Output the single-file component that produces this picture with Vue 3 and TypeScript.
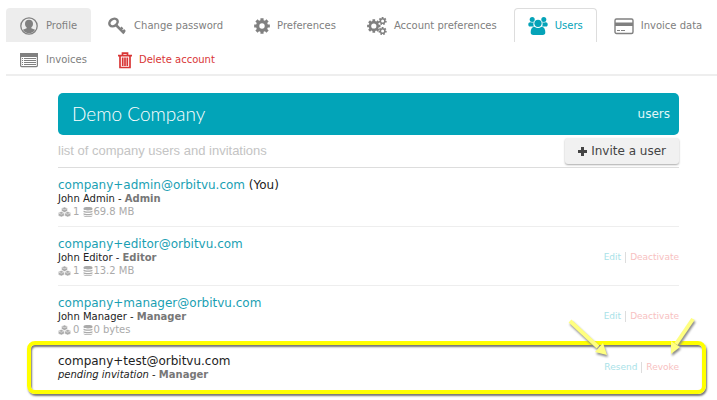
<script setup lang="ts">
interface Tab {
  id: string
  label: string
  state?: 'hover' | 'active' | 'danger'
}

interface Member {
  email: string
  name: string
  role: string
  you?: boolean
  pending?: boolean
  items?: number
  storage?: string
  actions: string[]
}

const tabs: Tab[] = [
  { id: 'profile', label: 'Profile', state: 'hover' },
  { id: 'key', label: 'Change password' },
  { id: 'gear', label: 'Preferences' },
  { id: 'gears', label: 'Account preferences' },
  { id: 'users', label: 'Users', state: 'active' },
  { id: 'card', label: 'Invoice data' },
  { id: 'list', label: 'Invoices' },
  { id: 'trash', label: 'Delete account', state: 'danger' },
]

const members: Member[] = [
  { email: 'company+admin@orbitvu.com', name: 'John Admin', role: 'Admin', you: true, items: 1, storage: '69.8 MB', actions: [] },
  { email: 'company+editor@orbitvu.com', name: 'John Editor', role: 'Editor', items: 1, storage: '13.2 MB', actions: ['Edit', 'Deactivate'] },
  { email: 'company+manager@orbitvu.com', name: 'John Manager', role: 'Manager', items: 0, storage: '0 bytes', actions: ['Edit', 'Deactivate'] },
  { email: 'company+test@orbitvu.com', name: 'pending invitation', role: 'Manager', pending: true, actions: ['Resend', 'Revoke'] },
]

// Outline of a cog with square teeth around a centre point.
function cog(cx: number, cy: number, outer: number, inner: number, teeth: number): string {
  const points: string[] = []
  const step = (Math.PI * 2) / teeth
  for (let i = 0; i < teeth; i++) {
    const a = i * step - Math.PI / 2
    const corners: [number, number][] = [[-0.34, inner], [-0.25, outer], [0.25, outer], [0.34, inner]]
    for (const [offset, r] of corners) {
      const angle = a + offset * step
      points.push(`${(cx + Math.cos(angle) * r).toFixed(2)} ${(cy + Math.sin(angle) * r).toFixed(2)}`)
    }
  }
  return `M${points.join('L')}Z`
}
</script>

<template>
  <div class="page">
    <nav class="tabs" aria-label="Account">
      <a v-for="tab in tabs" :key="tab.id" href="#" class="tab" :class="tab.state">
        <svg v-if="tab.id === 'profile'" class="icon" width="19" height="18" viewBox="0 0 19 18" aria-hidden="true">
          <circle cx="9" cy="9" r="8.200" fill="none" stroke="currentColor" stroke-width="1.300" />
          <path fill="currentColor" d="M9 2.800c2.500 0 4 1.600 4 3.900 0 1.600-.7 3-1.700 3.800v.8l3.800 1.500c-1.200 2.200-3.400 3.500-6.100 3.500s-4.900-1.300-6.100-3.500l3.800-1.500v-.8C5.700 9.700 5 8.300 5 6.700c0-2.300 1.500-3.900 4-3.900z" />
        </svg>
        <svg v-else-if="tab.id === 'key'" class="icon" width="19" height="18" viewBox="0 0 19 18" aria-hidden="true">
          <ellipse cx="5.500" cy="5.500" rx="4.500" ry="3.400" transform="rotate(-38 5.500 5.500)" fill="none" stroke="currentColor" stroke-width="2.500" />
          <path fill="none" stroke="currentColor" stroke-width="2.500" d="M8 8l8.200 8.300M14.500 10.500l-2.500 2.500M17 13l-2.500 2.500" />
        </svg>
        <svg v-else-if="tab.id === 'gear'" class="icon" width="16" height="18" viewBox="0 0 16 18" aria-hidden="true">
          <path fill="currentColor" :d="cog(8, 9, 8, 6, 8)" />
          <circle cx="8" cy="9" r="2.700" fill="#fff" />
        </svg>
        <svg v-else-if="tab.id === 'gears'" class="icon" width="20" height="18" viewBox="0 0 20 18" aria-hidden="true">
          <path fill="currentColor" :d="cog(6.8, 9, 6.8, 5.2, 8)" />
          <circle cx="6.800" cy="9" r="2.600" fill="#fff" />
          <path fill="currentColor" :d="cog(15.6, 4, 4.2, 3, 7)" />
          <circle cx="15.600" cy="4" r="1.500" fill="#fff" />
          <path fill="currentColor" :d="cog(15.6, 14, 4.2, 3, 7)" />
          <circle cx="15.600" cy="14" r="1.500" fill="#fff" />
        </svg>
        <svg v-else-if="tab.id === 'users'" class="icon" width="20" height="18" viewBox="0 0 20 18" aria-hidden="true">
          <g fill="currentColor">
            <circle cx="4.200" cy="2.600" r="2.500" />
            <circle cx="15.800" cy="2.600" r="2.500" />
            <path d="M.3 7.300C.3 5.700 1.300 5 2.800 5.200c1 .5 2.200.5 3 0-.6 1.400-.6 3 .2 4.400H2C.8 9.600.3 8.700.3 7.300zM19.700 7.300c0-1.600-1-2.300-2.500-2.100-1 .5-2.200.5-3 0 .6 1.400.6 3-.2 4.400h4c1.200 0 1.700-.9 1.700-2.300z" />
            <circle cx="10" cy="6.300" r="3.600" />
            <path d="M2.700 15.300c0-3 1-5.200 3.800-5.500 2.200 1.600 4.800 1.600 7 0 2.800.3 3.800 2.500 3.800 5.500 0 1.800-.8 2.700-2.600 2.700H5.300c-1.800 0-2.600-.9-2.600-2.700z" />
          </g>
        </svg>
        <svg v-else-if="tab.id === 'card'" class="icon" width="20" height="18" viewBox="0 0 20 18" aria-hidden="true">
          <rect x="1" y="2" width="18" height="14.500" rx="1.500" fill="none" stroke="currentColor" stroke-width="1.400" />
          <path fill="currentColor" d="M1 5.500h18V9H1zM3 13h3v1H3zM7 13h4v1H7z" />
        </svg>
        <svg v-else-if="tab.id === 'list'" class="icon" width="19" height="18" viewBox="0 0 19 18" aria-hidden="true">
          <rect x=".6" y="2.600" width="16.800" height="13" rx="1" fill="none" stroke="currentColor" stroke-width="1.200" />
          <path fill="currentColor" d="M0 2h18v4H0zM2 7h1v1H2zM4 7h12v1H4zM2 9h1v1H2zM4 9h12v1H4zM2 11h1v1H2zM4 11h12v1H4zM2 13h1v1H2zM4 13h12v1H4z" />
        </svg>
        <svg v-else class="icon" width="14" height="18" viewBox="0 0 14 18" aria-hidden="true">
          <path fill="none" stroke="currentColor" stroke-width="1.700" d="M4.500 4V2.200h5V4M0 4.600h14M2 4.500v12h10v-12M4.700 6.500v8.500M7 6.500v8.500M9.300 6.500v8.500" />
        </svg>
        <span>{{ tab.label }}</span>
      </a>
    </nav>

    <main class="content">
      <header class="banner">
        <h1>Demo Company</h1>
        <span class="section">users</span>
      </header>

      <div class="toolbar">
        <p>list of company users and invitations</p>
        <button type="button" class="invite">
          <svg width="9" height="9" viewBox="0 0 9 9" aria-hidden="true">
            <path fill="currentColor" d="M3 0h3v3h3v3H6v3H3V6H0V3h3z" />
          </svg>
          Invite a user
        </button>
      </div>

      <ul class="members">
        <li v-for="member in members" :key="member.email" class="member">
          <div class="details">
            <div class="email">
              <span v-if="member.pending">{{ member.email }}</span>
              <a v-else href="#">{{ member.email }}</a>
              <span v-if="member.you"> (You)</span>
            </div>
            <div class="name">
              <em v-if="member.pending">{{ member.name }}</em>
              <span v-else>{{ member.name }}</span>
              - <strong>{{ member.role }}</strong>
            </div>
            <div v-if="member.storage" class="stats">
              <svg width="13" height="10" viewBox="0 0 13 10" aria-hidden="true">
                <g fill="currentColor" stroke="#fff" stroke-width=".5">
                  <path d="M6.500 0l3 1.200v3l-3 1.300-3-1.300v-3zM3.300 4.500l3 1.200v3L3.300 10l-3-1.300v-3zM9.700 4.500l3 1.200v3l-3 1.300-3-1.300v-3z" />
                  <path fill="none" d="M4 1.700l2.500 1 2.500-1M.8 6.200l2.500 1 2.500-1M7.200 6.200l2.500 1 2.500-1" />
                </g>
              </svg>
              <span class="count">{{ member.items }}</span>
              <svg width="10" height="10" viewBox="0 0 9 10" aria-hidden="true">
                <path fill="currentColor" d="M0 1.400C0-.4 9-.4 9 1.400v.8C9 3.800 0 3.800 0 2.200zM0 3.800c1 1 8 1 9 0v1c0 1.400-9 1.400-9 0zM0 6.200c1 1 8 1 9 0v1c0 1.400-9 1.400-9 0zM0 8.400c1 1 8 1 9 0v.4c0 1.600-9 1.600-9 0z" />
              </svg>
              <span>{{ member.storage }}</span>
            </div>
          </div>
          <div v-if="member.actions.length" class="actions">
            <button v-for="action in member.actions" :key="action" type="button">{{ action }}</button>
          </div>
          <div v-if="member.pending" class="highlight">
            <svg class="arrows" width="130" height="44" viewBox="0 0 130 44" aria-hidden="true">
              <path d="M3 4L31 30" />
              <path class="head" d="M40 38l-12-3 8-9z" />
              <path d="M126 2l-17 25" />
              <path class="head" d="M104 37l0-13 9 6z" />
            </svg>
          </div>
        </li>
      </ul>
    </main>
  </div>
</template>

<style>
body {
  margin: 0;
  background: #fff;
}
</style>

<style scoped>
.page {
  padding: 8px 0 11px;
  font-family: Verdana, "DejaVu Sans", sans-serif;
  color: #222;
}

.tabs {
  display: flex;
  flex-wrap: wrap;
  column-gap: 3px;
  padding: 0 0 0 6px;
  background: linear-gradient(#eee, #eee) 6px 100% / 100% 2px no-repeat;
}

.tab {
  box-sizing: border-box;
  display: flex;
  align-items: center;
  gap: 7px;
  height: 34px;
  padding: 0 13px;
  border: 1px solid transparent;
  border-bottom: 0;
  border-radius: 4px 4px 0 0;
  font-size: 10px;
  color: #808080;
  text-decoration: none;
  white-space: nowrap;
}

.hover {
  background: #ededed;
}

.active {
  border-color: #ddd;
  color: #05a3b8;
}

.danger {
  color: #d93636;
}

.icon {
  flex: none;
}

.content {
  padding: 17px 38px 0 58px;
}

.banner {
  display: flex;
  align-items: center;
  justify-content: space-between;
  height: 42px;
  padding: 0 9px 0 14px;
  border-radius: 5px;
  background: #02a4b8;
  color: #fff;
}

.banner h1 {
  margin: 0;
  font: 300 19px/24px Lato, sans-serif;
}

.section {
  font-size: 12px;
  color: #e0f7f9;
}

.toolbar {
  display: flex;
  align-items: center;
  justify-content: space-between;
  height: 32px;
  border-bottom: 1px solid #ddd;
}

.toolbar p {
  margin: 0;
  font: 13px/16px Arial, "Liberation Sans", sans-serif;
  color: #c4c4c4;
}

.invite {
  display: flex;
  align-items: center;
  gap: 4px;
  height: 26px;
  padding: 0 13px;
  border: 0;
  border-radius: 3px;
  background: #f1f1f1;
  box-shadow: 0 1px 2px #aaa;
  font: inherit;
  font-size: 12px;
  color: #444;
}

.members {
  margin: 0;
  padding: 0;
  list-style: none;
}

.member {
  position: relative;
  display: flex;
  align-items: center;
  justify-content: space-between;
  height: 56px;
  padding-top: 2px;
  border-bottom: 1px solid #eee;
}

.member:last-child {
  height: 44px;
  padding-top: 0;
  border-bottom: 0;
}

.email {
  font-size: 12px;
  line-height: 14px;
}

.email a {
  color: #1a9fb3;
  text-decoration: none;
}

.name {
  font-size: 10px;
  line-height: 13px;
}

.name strong {
  color: #777;
}

.stats {
  display: flex;
  align-items: center;
  font-size: 10px;
  line-height: 14px;
  color: #aaa;
}

.count {
  margin: 0 4px 0 2px;
}

.actions {
  display: flex;
  align-items: center;
}

.actions button {
  padding: 0;
  border: 0;
  background: none;
  font: inherit;
  font-size: 9px;
  line-height: 11px;
  color: #a9e2e8;
}

.actions button + button {
  margin-left: 4px;
  padding-left: 4px;
  border-left: 1px solid #ddd;
  color: #f7c1c1;
}

.highlight {
  position: absolute;
  inset: -4px -27px -5px -31px;
  border: 4px solid #ff0;
  border-radius: 8px;
  box-shadow: 1px 2px 2px #777, inset 1px 2px 2px #777;
  pointer-events: none;
}

.arrows {
  position: absolute;
  right: 5px;
  top: -28px;
  overflow: visible;
  filter: drop-shadow(1px 2px 1px #888);
}

.arrows path {
  fill: none;
  stroke: #ffff80;
  stroke-width: 4px;
}

.arrows .head {
  fill: #ffff80;
  stroke: none;
}
</style>
